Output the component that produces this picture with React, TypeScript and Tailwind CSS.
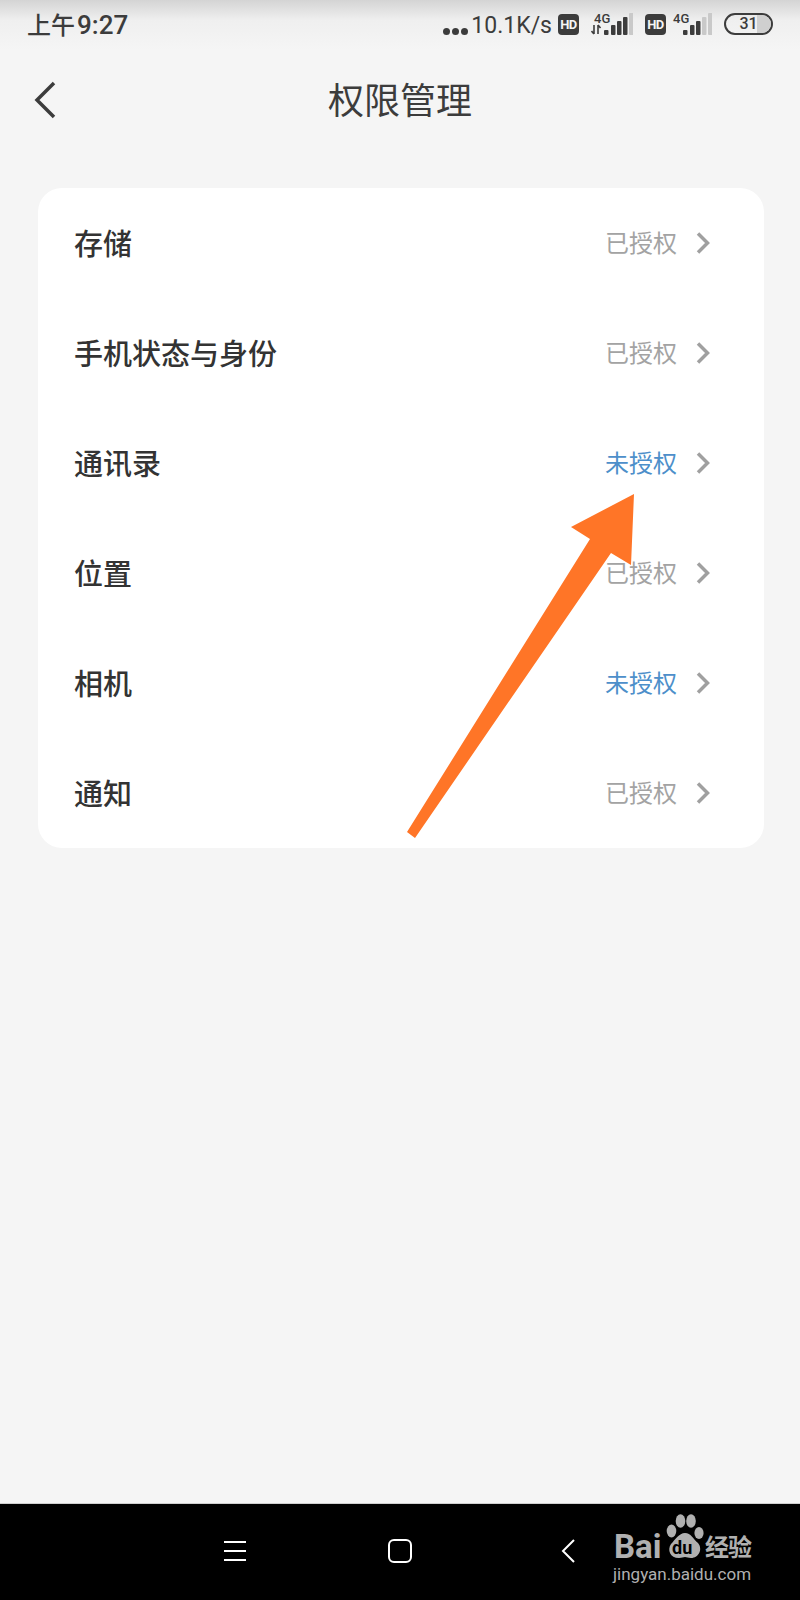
const FONT = { fontFamily: '"Roboto", "Noto Sans CJK SC", sans-serif' };

const ROWS = [
  { label: "存储", ok: true },
  { label: "手机状态与身份", ok: true },
  { label: "通讯录", ok: false },
  { label: "位置", ok: true },
  { label: "相机", ok: false },
  { label: "通知", ok: true },
];

function HdBadge({ className = "" }: { className?: string }) {
  return (
    <span
      className={`flex h-[21px] w-[21px] items-center justify-center rounded-[4px] bg-[#3c3c3c] text-[13px] font-bold leading-none tracking-[-0.5px] text-[#f5f5f5] ${className}`}
    >
      HD
    </span>
  );
}

function Signal({ level, arrows }: { level: number; arrows?: boolean }) {
  const bars = [
    { x: 13, h: 5 },
    { x: 20, h: 10 },
    { x: 26, h: 14 },
    { x: 32, h: 18 },
    { x: 38, h: 22 },
  ];
  return (
    <span className="relative mb-[2px] block h-[24px] w-[42px]">
      <svg width="42" height="24" viewBox="0 0 42 24" className="block">
        {arrows && (
          <path d="M3 13v9M0.5 19l2.5 3M7 22v-9M7 13l2.5 3" fill="none" stroke="#3c3c3c" strokeWidth="1.6" />
        )}
        {bars.map((b, i) => (
          <rect key={b.x} x={b.x} y={23 - b.h} width="4.5" height={b.h} rx="1" fill={i < level ? "#3c3c3c" : "#c9c9c9"} />
        ))}
      </svg>
      <span className="absolute left-[3px] top-0 text-[13px] font-medium leading-none text-[#3c3c3c]">4G</span>
    </span>
  );
}

function StatusBar() {
  return (
    <div className="flex h-[50px] items-center justify-between bg-gradient-to-b from-[#d4d4d4] via-[#efefef] via-40% to-[#f5f5f5] pl-[27px] pr-[27px] text-[#3c3c3c]">
      <span className="flex items-baseline text-[24px] font-medium leading-none">
        上午<span className="ml-[2px] text-[26px]">9:27</span>
      </span>
      <div className="flex items-center">
        <span className="mt-[12px] flex gap-[2px]">
          <i className="block h-[7px] w-[7px] rounded-full bg-[#3c3c3c]" />
          <i className="block h-[7px] w-[7px] rounded-full bg-[#3c3c3c]" />
          <i className="block h-[7px] w-[7px] rounded-full bg-[#3c3c3c]" />
        </span>
        <span className="ml-[3px] pt-[1px] text-[23px] leading-none">10.1K/s</span>
        <HdBadge className="ml-[6px] mb-[2px]" />
        <span className="ml-[12px]">
          <Signal level={4} arrows />
        </span>
        <HdBadge className="ml-[12px] mb-[2px]" />
        <span className="ml-[4px] mr-[12px]">
          <Signal level={3} />
        </span>
        <span className="relative mb-[2px] flex h-[22px] w-[49px] items-center justify-center overflow-hidden rounded-full border-2 border-[#3c3c3c] text-[16px] font-medium leading-none">
          <span className="absolute bottom-0 right-0 top-0 w-[14px] bg-[#cfcfcf]" />
          <span className="relative">31</span>
        </span>
      </div>
    </div>
  );
}

function Row({ label, ok }: { label: string; ok: boolean }) {
  return (
    <div className="flex h-[110px] items-center pl-[36px] pr-[54px]">
      <span className="flex-1 pt-[4px] text-[29px] font-medium leading-none text-[#333333]">{label}</span>
      <span className={`pt-[2px] text-[24px] leading-none ${ok ? "text-[#a3a3a3]" : "text-[#4d8fca]"}`}>
        {ok ? "已授权" : "未授权"}
      </span>
      <svg width="14" height="22" viewBox="0 0 14 22" className="ml-[19px]">
        <path d="M2 1.5l9.5 9.5-9.5 9.5" fill="none" stroke="#a0a0a0" strokeWidth="3.5" />
      </svg>
    </div>
  );
}

function NavBar() {
  return (
    <div className="flex h-[97px] items-center border-t border-[#cfcfcf] bg-black pb-[3px] pl-[224px]">
      <svg width="22" height="22" viewBox="0 0 22 22">
        <path d="M0 2h22M0 11h22M0 20h22" stroke="#fff" strokeWidth="2" />
      </svg>
      <svg width="24" height="24" viewBox="0 0 24 24" className="ml-[142px]">
        <rect x="1" y="1" width="22" height="22" rx="5" fill="none" stroke="#fff" strokeWidth="2" />
      </svg>
      <svg width="14" height="24" viewBox="0 0 14 24" className="ml-[149px]">
        <path d="M13 1L2 12l11 11" fill="none" stroke="#fff" strokeWidth="2" />
      </svg>
    </div>
  );
}

function Watermark() {
  return (
    <div className="absolute left-[612px] top-[1514px] h-[70px] w-[146px] text-[#b0b0b0]">
      <span className="absolute left-[2px] top-[15px] text-[33px] font-bold leading-[36px]">Bai</span>
      <svg width="38" height="46" viewBox="0 0 38 46" className="absolute left-[54px] top-0">
        <ellipse cx="5.5" cy="17" rx="4.8" ry="6.5" fill="#b0b0b0" />
        <ellipse cx="14.5" cy="7" rx="4.8" ry="6.8" fill="#b0b0b0" />
        <ellipse cx="25" cy="7" rx="4.8" ry="6.8" fill="#b0b0b0" />
        <ellipse cx="33" cy="19" rx="4.6" ry="6" fill="#b0b0b0" />
        <path d="M19 19c6 0 8 6 13 10 5 6 1 15-7 15-3 0-4-1-6-1s-3 1-6 1c-9 0-12-8-8-14 4-4 8-11 14-11z" fill="#b0b0b0" />
      </svg>
      <span className="absolute left-[60px] top-[25px] text-[18px] font-bold leading-[18px] text-black">du</span>
      <span className="absolute left-[93px] top-[18px] text-[24px] font-bold leading-[32px] tracking-[-1px]">经验</span>
      <span className="absolute left-[1px] top-[50px] text-[17px] leading-[20px]">jingyan.baidu.com</span>
    </div>
  );
}

export default function App() {
  return (
    <div className="relative flex h-[1600px] w-[800px] flex-col overflow-hidden bg-[#f5f5f5]" style={FONT}>
      <StatusBar />
      <header className="relative flex h-[100px] items-center justify-center">
        <svg width="24" height="38" viewBox="0 0 24 38" className="absolute left-[33px] top-[31px]">
          <path d="M21 2L4 19l17 17" fill="none" stroke="#3c3c3c" strokeWidth="3.5" />
        </svg>
        <h1 className="pt-[4px] text-[36px] font-normal leading-none text-[#3c3c3c]">权限管理</h1>
      </header>
      <div className="ml-[38px] mr-[36px] mt-[38px] overflow-hidden rounded-[24px] bg-white">
        {ROWS.map((r) => (
          <Row key={r.label} label={r.label} ok={r.ok} />
        ))}
      </div>
      <div className="flex-1" />
      <NavBar />
      <Watermark />
      {/* orange annotation arrow drawn over the list */}
      <svg width="800" height="1600" viewBox="0 0 800 1600" className="pointer-events-none absolute left-0 top-0">
        <path d="M634 494L571 527L590 539L407 832L415 838L611 553L631 565Z" fill="#ff7527" />
      </svg>
    </div>
  );
}
